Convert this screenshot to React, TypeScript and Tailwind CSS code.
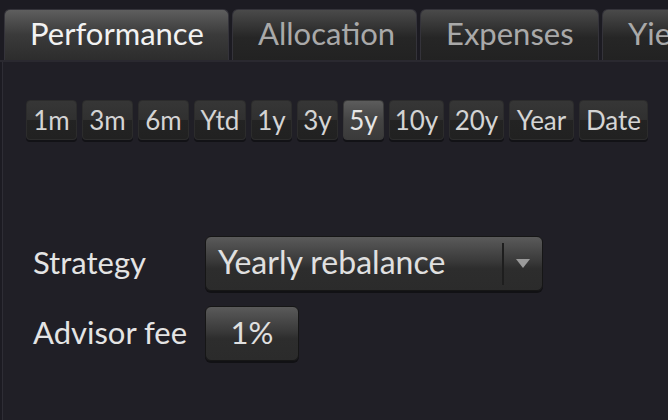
import React from "react";

const periods: [string, number][] = [
  ["1m", 51],
  ["3m", 51],
  ["6m", 51],
  ["Ytd", 52],
  ["1y", 41],
  ["3y", 41],
  ["5y", 41],
  ["10y", 55],
  ["20y", 55],
  ["Year", 65],
  ["Date", 69],
];
const tabs: [string, number][] = [
  ["Performance", 225],
  ["Allocation", 185],
  ["Expenses", 179],
  ["Yield", 120],
];

export default function App() {
  return (
    <div
      className="w-[668px] h-[420px] overflow-hidden bg-[#1c1b22] flex flex-col"
      style={{ fontFamily: "Lato, 'Open Sans', sans-serif" }}
    >
      {/* tab bar */}
      <div className="h-[62px] pt-[9px] pl-[4px] flex items-stretch gap-[3px] border-b-2 border-[#2a2930] shrink-0">
        {tabs.map(([t, w], i) => {
          const active = i === 0;
          return (
            <div
              key={t}
              style={{ width: w }}
              className={
                active
                  ? "pl-[25px] rounded-t-[6px] border border-b-0 border-[#34333a] bg-gradient-to-b from-[#5e5e5e] via-[#3a3a3a] to-[#2d2d2d] text-[#f2f2f2] text-[31px] leading-none flex items-center shrink-0"
                  : "pl-[25px] rounded-t-[6px] border border-b-0 border-[#34333a] bg-[linear-gradient(to_bottom,#4a4a4a_0%,#262626_55%,#222222_100%)] text-[#a9a9a9] text-[31px] leading-none flex items-center shrink-0"
              }
            >
              <span className="pb-[3px] whitespace-nowrap">{t}</span>
            </div>
          );
        })}
      </div>

      {/* content panel */}
      <div className="flex-1 ml-[2px] border-l border-[#2e2d35] bg-[#201f26] flex flex-col">
        <div className="mt-[38px] pl-[23px] flex gap-[5px]">
          {periods.map(([p, w]) => {
            const active = p === "5y";
            return (
              <div
                key={p}
                style={{ width: w }}
                className={
                  active
                    ? "h-[40px] rounded-[4px] border border-[#3a3a3a] shadow-[0_2px_0_#121216] bg-[linear-gradient(to_bottom,#5c5c5c_0%,#444444_50%,#3a3a3a_100%)] text-[#e6e6e6] text-[26px] leading-none flex items-center justify-center"
                    : "h-[40px] rounded-[4px] border border-[#2c2c2c] shadow-[0_2px_0_#121216] bg-[linear-gradient(to_bottom,#363636_0%,#303030_50%,#232323_50%,#212121_100%)] text-[#d4d4d4] text-[26px] leading-none flex items-center justify-center"
                }
              >
                <span className="whitespace-nowrap">{p}</span>
              </div>
            );
          })}
        </div>

        <div className="mt-[96px] pl-[30px] flex flex-col gap-[15px]">
          <div className="flex items-center">
            <div className="w-[172px] text-[31px] leading-none text-[#e4e4e4] pb-[2px]">Strategy</div>
            <div className="w-[338px] h-[55px] rounded-[6px] border border-[#161616] shadow-[0_2px_0_#111114] bg-[linear-gradient(to_bottom,#5a5a5a_0%,#3a3a3a_45%,#2d2d2d_60%,#2b2b2b_100%)] flex items-center">
              <span className="flex-1 pl-[12px] text-[32px] leading-none text-[#e0e0e0] pb-[3px] whitespace-nowrap">Yearly rebalance</span>
              <div className="w-[2px] h-[42px] bg-[#1e1e1e]" />
              <div className="w-[38px] flex justify-center">
                <svg width="14" height="9" viewBox="0 0 14 9">
                  <polygon points="0,0 14,0 7,9" fill="#9a9a9a" />
                </svg>
              </div>
            </div>
          </div>
          <div className="flex items-center">
            <div className="w-[172px] text-[31px] leading-none text-[#e4e4e4] pb-[2px]">Advisor fee</div>
            <div className="w-[94px] h-[55px] rounded-[6px] border border-[#161616] shadow-[0_2px_0_#111114] bg-[linear-gradient(to_bottom,#5a5a5a_0%,#3a3a3a_45%,#2d2d2d_60%,#2b2b2b_100%)] flex items-center justify-center">
              <span className="text-[31px] leading-none text-[#e0e0e0] pb-[3px]">1%</span>
            </div>
          </div>
        </div>
      </div>
    </div>
  );
}
